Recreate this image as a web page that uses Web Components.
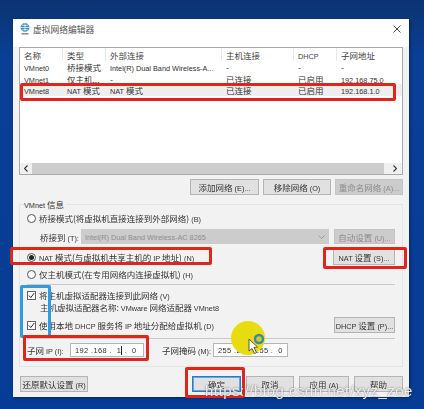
<!DOCTYPE html>
<html lang="zh">
<head>
<meta charset="utf-8">
<title>虚拟网络编辑器</title>
<style>
  html, body { margin: 0; height: 100%; }
  body {
    width: 424px; height: 409px; overflow: hidden; position: relative;
    background: linear-gradient(#0b3470, #0a3f96 14%, #063c96);
    font: 8.5px "Noto Sans CJK SC", sans-serif;
    color: #222;
  }
</style>
</head>
<body>
<vm-dialog>
  <net-table></net-table>
  <btn-row>
    <vm-button style="--w:69px">添加网络<l-t>(E)...</l-t></vm-button>
    <vm-button style="--w:68px">移除网络<l-t>(O)</l-t></vm-button>
    <vm-button style="--w:68px" disabled>重命名网络<l-t>(A)...</l-t></vm-button>
  </btn-row>
  <vmnet-group></vmnet-group>
  <dialog-footer></dialog-footer>
</vm-dialog>

<mark-box style="--x:20px;--y:83px;--w:376px;--h:18px;--c:#e0261c"></mark-box>
<mark-box style="--x:10px;--y:247px;--w:202px;--h:18px;--c:#e0261c"></mark-box>
<mark-box style="--x:323px;--y:247px;--w:84px;--h:22px;--c:#e0261c"></mark-box>
<mark-box style="--x:20px;--y:285px;--w:31px;--h:53px;--c:#2f9be0"></mark-box>
<mark-box style="--x:23px;--y:335px;--w:126px;--h:26px;--c:#e0261c"></mark-box>
<mark-box style="--x:185px;--y:367px;--w:60px;--h:31px;--c:#e0261c"></mark-box>

<click-spot></click-spot>
<water-mark>https://blog.csdn.net/xyz_zoe</water-mark>

<script>
const CJK = '"Noto Sans CJK SC", sans-serif';

// latin runs are set smaller than the chinese around them, like the original UI font
class LatinRun extends HTMLElement {
  constructor() {
    super();
    this.attachShadow({ mode: 'open' }).innerHTML = `
      <style>:host { font-family: "Liberation Sans", sans-serif; font-size: .86em; }</style>
      <slot></slot>`;
  }
}
customElements.define('l-t', LatinRun);

class VmButton extends HTMLElement {
  constructor() {
    super();
    this.attachShadow({ mode: 'open' }).innerHTML = `
      <style>
        :host {
          display: flex; align-items: center; justify-content: center; flex: none;
          box-sizing: border-box; width: var(--w, 50px); height: var(--h, 16px);
          background: #e1e1e1; border: 1px solid #b4b4b4;
          font: 8.5px ${CJK}; color: #333; white-space: nowrap;
        }
        :host([disabled]) { background: #ccc; border-color: #c4c4c4; color: #8c8c8c; }
        :host([primary]) { border: 1px solid #2a78c8; box-shadow: inset 0 0 0 1px #6aa6de; }
      </style>
      <span><slot></slot></span>`;
  }
}
customElements.define('vm-button', VmButton);

class BtnRow extends HTMLElement {
  constructor() {
    super();
    this.attachShadow({ mode: 'open' }).innerHTML = `
      <style>
        :host { display: flex; justify-content: flex-end; gap: 4px; margin: 4px 6px 0 0; }
      </style>
      <slot></slot>`;
  }
}
customElements.define('btn-row', BtnRow);

class VmDialog extends HTMLElement {
  constructor() {
    super();
    this.attachShadow({ mode: 'open' }).innerHTML = `
      <style>
        :host {
          display: flex; flex-direction: column; box-sizing: border-box;
          width: 396px; height: 378px; margin: 19px 0 0 13px;
          background: #f2f2f2; filter: blur(.35px);
          box-shadow: 1px 1px 3px rgba(0,0,0,.4);
        }
        .title { display: flex; align-items: center; gap: 3px; height: 28px; padding: 0 8px 8px 7px; box-sizing: border-box; background: #fff; font-size: 8.75px; color: #555; }
        .title span { flex: 1; }
        .title svg { display: block; }
      </style>
      <div class="title">
        <svg width="10" height="12" viewBox="0 0 10 12">
          <circle cx="5" cy="4.5" r="4.4" fill="#3b8fc4"/>
          <path d="M.6 4.5h8.8M5 .2v8.6M2 2q3 1.2 6 0M2 7q3-1.2 6 0" stroke="#fff" stroke-width=".7" fill="none"/>
          <path d="M1.5 10.8h7" stroke="#777" stroke-width="1.3"/>
        </svg>
        <span>虚拟网络编辑器</span>
        <svg width="8" height="8" viewBox="0 0 8 8"><path d="M.5.5l7 7M7.5.5l-7 7" stroke="#333" stroke-width=".9"/></svg>
      </div>
      <slot></slot>`;
  }
}
customElements.define('vm-dialog', VmDialog);

class NetTable extends HTMLElement {
  constructor() {
    super();
    const lat = s => `<l-t>${s}</l-t>`;
    const rows = [
      [lat('VMnet0'), '桥接模式', lat('Intel(R) Dual Band Wireless-A...'), '-', '-', '-'],
      [lat('VMnet1'), '仅主机...', '-', '已连接', '已启用', lat('192.168.75.0')],
      [lat('VMnet8'), lat('NAT') + ' 模式', lat('NAT') + ' 模式', '已连接', '已启用', lat('192.168.1.0')],
    ];
    const cols = ['名称', '类型', '外部连接', '主机连接', lat('DHCP'), '子网地址'];
    const cell = t => `<div class="c">${t}</div>`;
    this.attachShadow({ mode: 'open' }).innerHTML = `
      <style>
        :host {
          display: flex; flex-direction: column; box-sizing: border-box; margin: 0 6px; height: 128px;
          background: #fff; border: 1px solid #a9a9a9;
          color: #333; overflow: hidden;
        }
        .r { display: grid; grid-template-columns: 43px 43px 116px 72px 43px 1fr; flex: none; height: 11.7px; line-height: 12px; }
        .h { height: 13px; line-height: 14px; color: #444; }
        .h .c { border-right: 1px solid #e8e8e8; }
        .h .c:last-child { border: 0; }
        .s { background: #eee; }
        .c { padding-left: 4px; white-space: nowrap; overflow: hidden; }
        .scroll { display: flex; align-items: center; margin-top: auto; height: 11px; background: #f0f0f0; }
        .scroll svg { display: block; flex: none; margin: 0 4px; }
        .thumb { flex: 1; height: 11px; background: #cdcdcd; }
      </style>
      <div class="r h">${cols.map(cell).join('')}</div>
      ${rows.map((r, i) => `<div class="r${i === 2 ? ' s' : ''}">${r.map(cell).join('')}</div>`).join('')}
      <div class="scroll">
        <svg width="4" height="7" viewBox="0 0 4 7"><path d="M3.5.5l-3 3 3 3" fill="none" stroke="#333" stroke-width="1.1"/></svg>
        <div class="thumb"></div>
        <svg style="margin:0 5px 0 9px" width="4" height="7" viewBox="0 0 4 7"><path d="M.5.5l3 3-3 3" fill="none" stroke="#333" stroke-width="1.1"/></svg>
      </div>`;
  }
}
customElements.define('net-table', NetTable);

class RadioOpt extends HTMLElement {
  constructor() {
    super();
    this.attachShadow({ mode: 'open' }).innerHTML = `
      <style>
        :host { display: flex; align-items: center; gap: 3px; white-space: nowrap; }
        i { box-sizing: border-box; width: 9px; height: 9px; border: 1px solid #555; border-radius: 50%; background: #fff; display: grid; place-items: center; }
        :host([checked]) i::after { content: ""; width: 5px; height: 5px; border-radius: 50%; background: #222; }
      </style>
      <i></i><span><slot></slot></span>`;
  }
}
customElements.define('radio-opt', RadioOpt);

class CheckOpt extends HTMLElement {
  constructor() {
    super();
    this.attachShadow({ mode: 'open' }).innerHTML = `
      <style>
        :host { display: flex; align-items: center; gap: 3px; white-space: nowrap; }
        svg { display: block; flex: none; }
      </style>
      <svg width="9" height="9" viewBox="0 0 9 9">
        <rect x=".5" y=".5" width="8" height="8" fill="#fff" stroke="#666"/>
        <path d="M1.8 4.5l2 2 3.4-4.4" fill="none" stroke="#222"/>
      </svg>
      <span><slot></slot></span>`;
  }
}
customElements.define('check-opt', CheckOpt);

class IpInput extends HTMLElement {
  constructor() {
    super();
    this.attachShadow({ mode: 'open' }).innerHTML = `
      <style>
        :host {
          display: flex; align-items: center; box-sizing: border-box; flex: none;
          width: var(--w, 75px); height: 14px; padding-left: 4px;
          background: #fff; border: 1px solid #b5b5b5;
          font: 7.5px "Liberation Sans", sans-serif; letter-spacing: .35px; color: #333;
        }
        span { white-space: pre; }
        ::slotted(b) { border-right: 1px solid #222; font-weight: normal; }
      </style>
      <span><slot></slot></span>`;
  }
}
customElements.define('ip-input', IpInput);

class VmnetGroup extends HTMLElement {
  constructor() {
    super();
    this.attachShadow({ mode: 'open' }).innerHTML = `
      <style>
        :host {
          display: flex; flex-direction: column; box-sizing: border-box;
          margin: 9px 6px 0; height: 163px; padding: 0 7px 0 7px;
          border: 1px solid #e4e4e4; position: relative; color: #333;
        }
        .legend { position: absolute; left: 4px; top: -7px; background: #f2f2f2; padding-right: 2px; }
        .row { display: flex; align-items: center; justify-content: space-between; }
        .bridge { margin: 5px 0 0 13px; height: 15px; justify-content: flex-start; }
        .bridge span { width: 41px; white-space: nowrap; }
        .select { box-sizing: border-box; width: 248px; height: 15px; background: #ccc; color: #8e8e8e; padding: 0 4px; line-height: 15px; position: relative; }
        .select svg { position: absolute; right: 4px; top: 6px; }
        hr { border: 0; border-top: 1px solid #c9c9c9; margin: 0; }
        .note { margin: 1px 0 0 13px; height: 11px; line-height: 11px; white-space: nowrap; }
        .sub { display: flex; align-items: center; height: 14px; margin-top: 4px; }
        .field { display: flex; align-items: center; }
        .field span { white-space: nowrap; }
      </style>
      <div class="legend"><l-t>VMnet</l-t> 信息</div>
      <radio-opt style="margin-top:7px;height:12px">桥接模式(将虚拟机直接连接到外部网络)<l-t>(B)</l-t></radio-opt>
      <div class="row bridge">
        <span>桥接到<l-t>(T):</l-t></span>
        <div class="select"><l-t>Intel(R) Dual Band Wireless-AC 8265</l-t>
          <svg width="7" height="4" viewBox="0 0 7 4"><path d="M.5.5l3 3 3-3" fill="none" stroke="#999"/></svg>
        </div>
        <vm-button disabled style="--w:61px;--h:15px;margin-left:5px">自动设置<l-t>(U)...</l-t></vm-button>
      </div>
      <div class="row" style="margin-top:5px;height:16px">
        <radio-opt checked><l-t>NAT</l-t> 模式(与虚拟机共享主机的 <l-t>IP</l-t> 地址)<l-t>(N)</l-t></radio-opt>
        <vm-button style="--w:62px;--h:16px"><l-t>NAT</l-t> 设置<l-t>(S)...</l-t></vm-button>
      </div>
      <radio-opt style="margin-top:3px;height:12px">仅主机模式(在专用网络内连接虚拟机)<l-t>(H)</l-t></radio-opt>
      <hr style="margin-top:4px">
      <check-opt style="margin-top:4px;height:12px">将主机虚拟适配器连接到此网络<l-t>(V)</l-t></check-opt>
      <div class="note">主机虚拟适配器名称: <l-t>VMware</l-t> 网络适配器 <l-t>VMnet8</l-t></div>
      <div class="row" style="margin-top:4px;height:16px">
        <check-opt>使用本地 <l-t>DHCP</l-t> 服务将 <l-t>IP</l-t> 地址分配给虚拟机<l-t>(D)</l-t></check-opt>
        <vm-button style="--w:61px;--h:16px"><l-t>DHCP</l-t> 设置<l-t>(P)...</l-t></vm-button>
      </div>
      <hr style="margin-top:5px">
      <div class="sub">
        <div class="field" style="width:135px"><span style="width:43px">子网 <l-t>IP (I):</l-t></span><ip-input style="--w:74px">192 .168 .  <b>1</b> .  0</ip-input></div>
        <div class="field"><span style="width:51px">子网掩码<l-t>(M):</l-t></span><ip-input>255 .255 .255 .  0</ip-input></div>
      </div>`;
  }
}
customElements.define('vmnet-group', VmnetGroup);

class DialogFooter extends HTMLElement {
  constructor() {
    super();
    this.attachShadow({ mode: 'open' }).innerHTML = `
      <style>
        :host { display: flex; align-items: center; gap: 5px; margin: 9px 6px 0 7px; }
        .sp { flex: 1; }
      </style>
      <vm-button style="--w:68px">还原默认设置<l-t>(R)</l-t></vm-button>
      <div class="sp"></div>
      <vm-button primary style="--w:49px">确定</vm-button>
      <vm-button style="--w:48px">取消</vm-button>
      <vm-button style="--w:50px">应用<l-t>(A)</l-t></vm-button>
      <vm-button style="--w:49px">帮助</vm-button>`;
  }
}
customElements.define('dialog-footer', DialogFooter);

class MarkBox extends HTMLElement {
  constructor() {
    super();
    this.attachShadow({ mode: 'open' }).innerHTML = `
      <style>
        :host {
          position: absolute; left: var(--x); top: var(--y); width: var(--w); height: var(--h);
          box-sizing: border-box; border: 3px solid var(--c); border-radius: 2px; filter: blur(.4px);
        }
      </style>`;
  }
}
customElements.define('mark-box', MarkBox);

class ClickSpot extends HTMLElement {
  constructor() {
    super();
    this.attachShadow({ mode: 'open' }).innerHTML = `
      <style>
        :host { position: absolute; left: 231px; top: 321px; }
        svg { display: block; }
      </style>
      <svg width="36" height="40" viewBox="0 0 36 40">
        <circle cx="17" cy="17" r="17" fill="#e8dc10"/>
        <circle cx="28" cy="18" r="4" fill="#d8c820" stroke="#2c8fb0" stroke-width="2.4"/>
        <path d="M18 18v12l3-2.5 2.5 5 2-1-2.5-5 3.5-.5z" fill="#fff" stroke="#333" stroke-width=".8"/>
      </svg>`;
  }
}
customElements.define('click-spot', ClickSpot);

class WaterMark extends HTMLElement {
  constructor() {
    super();
    this.attachShadow({ mode: 'open' }).innerHTML = `
      <style>
        :host {
          position: absolute; left: 205px; top: 382px; white-space: nowrap;
          font: 15px "Liberation Sans", sans-serif; letter-spacing: .5px;
          color: rgba(245,245,245,.92); text-shadow: 0 0 2px rgba(60,60,60,.8);
        }
      </style>
      <slot></slot>`;
  }
}
customElements.define('water-mark', WaterMark);
</script>
</body>
</html>
